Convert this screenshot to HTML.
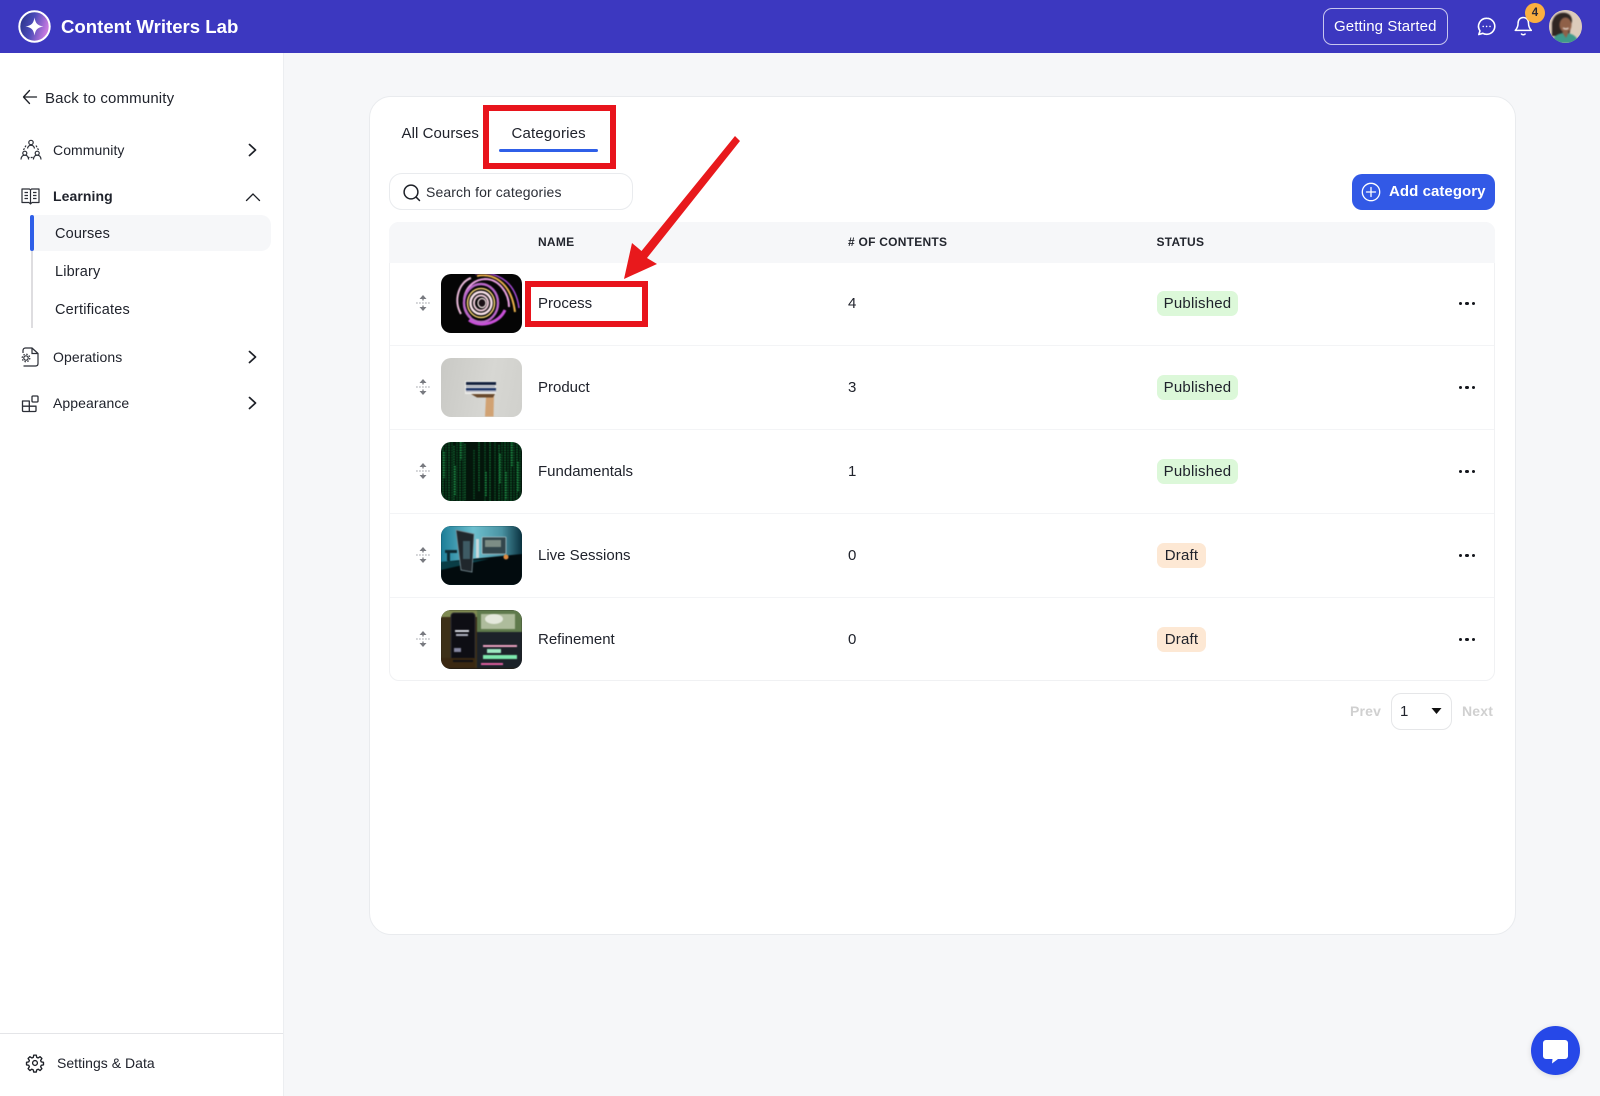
<!DOCTYPE html>
<html><head><meta charset="utf-8"><title>Categories</title>
<style>
*{box-sizing:border-box}
html,body{margin:0;padding:0}
body{width:1600px;height:1095px;position:relative;overflow:hidden;background:#f6f7f9;font-family:"Liberation Sans",sans-serif;color:#20232c}
.a{position:absolute}
.t{position:absolute;white-space:nowrap;line-height:20px;height:20px;font-size:15px;letter-spacing:0}
svg{position:absolute;display:block;overflow:visible}
.thumb{position:absolute;left:441px;width:81px;height:58.5px;border-radius:10px;overflow:hidden}
.thumb svg{left:0;top:0;overflow:hidden}
.line{position:absolute;left:390px;width:1104px;height:1px;background:#f3f4f6}
.badge{position:absolute;left:1157px;height:25px;line-height:25px;border-radius:7px;font-size:15px;letter-spacing:.2px;text-align:center}
.pub{width:81px;background:#dcf8d9}
.dr{width:49px;background:#fde8d4}
.dots{position:absolute;left:1459px;width:16px;height:4px}
.dots i{position:absolute;top:0;width:3.4px;height:3.4px;border-radius:50%;background:#14161c}
.n{position:absolute;left:848px;font-size:15px;line-height:20px}
.h{position:absolute;top:232px;line-height:20px;font-size:12px;font-weight:bold;letter-spacing:.25px;color:#23262e}
</style></head><body>

<!-- top bar -->
<div class="a" style="left:0;top:0;width:1600px;height:52.5px;background:#3c38c0"></div>
<svg style="left:18px;top:10px" width="33" height="33" viewBox="0 0 33 33">
<defs><linearGradient id="lg" x1="0" y1="0" x2="1" y2="0.3"><stop offset="0" stop-color="#24307e"/><stop offset=".5" stop-color="#4a4ab8"/><stop offset="1" stop-color="#c77ae0"/></linearGradient></defs>
<circle cx="16.5" cy="16.5" r="15.2" fill="url(#lg)" stroke="#fff" stroke-width="2"/>
<path d="M16.5 7.5C17.5 13.500 19.500 15.500 25.500 16.500C19.500 17.500 17.500 19.500 16.500 25.500C15.500 19.500 13.500 17.500 7.500 16.500C13.500 15.500 15.500 13.500 16.500 7.500Z" fill="#fff"/>
</svg>
<div class="t" style="left:61px;top:16.500px;color:#fff;font-weight:bold;font-size:18.6px">Content Writers Lab</div>

<div class="a" style="left:1323px;top:8px;width:125px;height:36.5px;border:1px solid #c8c7ee;border-radius:9px"></div>
<div class="t" style="left:1334px;top:16.500px;color:#fff;font-size:15px;letter-spacing:.11px">Getting Started</div>

<svg style="left:1477px;top:17px" width="19" height="19" viewBox="0 0 19 19" fill="none" stroke="#fff" stroke-width="1.6">
<path d="M9.8 1.3a8 8 0 0 1 0 16c-1.5 0-2.8-.3-4-1l-4 1.200 1.200-3.600a8 8 0 0 1 6.800-12.600Z" stroke-linejoin="round"/>
<circle cx="6.200" cy="9.400" r=".8" fill="#fff" stroke="none"/><circle cx="9.600" cy="9.400" r=".8" fill="#fff" stroke="none"/><circle cx="13" cy="9.400" r=".8" fill="#fff" stroke="none"/>
</svg>
<svg style="left:1514px;top:16px" width="19" height="21" viewBox="0 0 19 21" fill="none" stroke="#fff" stroke-width="1.500">
<path d="M9.300 1.500c-3.300 0-5.200 2.600-5.200 5.600 0 4-1.400 5.700-2.800 7.300h16c-1.400-1.600-2.800-3.300-2.800-7.300 0-3-1.900-5.600-5.200-5.600Z" stroke-linejoin="round"/>
<path d="M7.500 18c.8 1 2.700 1 3.600 0" stroke-linecap="round"/>
</svg>
<div class="a" style="left:1525px;top:3px;width:20px;height:20px;border-radius:50%;background:#fbb040;color:#2b2a35;font-size:11.500px;font-weight:bold;line-height:20px;text-align:center">4</div>
<div class="a" style="left:1549px;top:10px;width:33px;height:33px;border-radius:50%;overflow:hidden;background:#d8c6b4">
<svg width="33" height="33" viewBox="0 0 33 33" style="left:0;top:0;filter:blur(.7px);overflow:hidden">
<rect width="33" height="33" fill="#dccbbb"/>
<path d="M3 26V13C5 4 11 2 17 3c4 1 6 4 6 8l-3 15Z" fill="#2f2622"/>
<ellipse cx="16.500" cy="15" rx="6" ry="7.500" fill="#8f6048"/>
<path d="M3 33c1-7 6-10 13-10s12 3 14 10Z" fill="#3f9a8a"/>
<path d="M13 22h7l-3 6Z" fill="#8f6048"/>
<path d="M14 18c2 1.300 4 1.300 5.500 0" stroke="#f3e9e0" stroke-width="1.200" fill="none"/>
</svg></div>

<!-- sidebar -->
<div class="a" style="left:0;top:52.5px;width:283.5px;height:1043px;background:#fff;border-right:1px solid #eceef1"></div>

<svg style="left:22px;top:89px" width="16" height="16" viewBox="0 0 16 16" fill="none" stroke="#1d2027" stroke-width="1.300" stroke-linecap="round" stroke-linejoin="round"><path d="M14.500 8H1.500M7.500 1.500 1.500 8l6 6.500"/></svg>
<div class="t" style="left:45px;top:89px;letter-spacing:.15px">Back to community</div>

<svg style="left:20px;top:139px" width="22" height="22" viewBox="0 0 22 22" fill="none" stroke="#2b2e36" stroke-width="1.200">
<circle cx="11" cy="3.500" r="2.200"/><circle cx="4.800" cy="14.200" r="2"/><circle cx="17.200" cy="14.200" r="2"/>
<path d="M7.500 9.500c.4-2 1.800-3.200 3.500-3.200s3.100 1.200 3.500 3.200M1 20.500c.2-2.800 1.700-4.300 3.800-4.300s3.600 1.500 3.800 4.300M13.400 20.500c.2-2.800 1.700-4.300 3.800-4.300s3.600 1.500 3.800 4.300"/>
<path d="M6 6.500 3.500 11M16 6.500l2.500 4.500M7.500 18.500h7" stroke-dasharray="2 1.200"/>
</svg>
<div class="t" style="left:53px;top:139.500px;font-size:14px;letter-spacing:.08px">Community</div>
<svg style="left:248px;top:143px" width="9" height="14" viewBox="0 0 9 14" fill="none" stroke="#1d2027" stroke-width="1.700" stroke-linecap="round" stroke-linejoin="round"><path d="M1.500 1.500 7.500 7l-6 5.500"/></svg>

<svg style="left:21px;top:187px" width="19" height="19" viewBox="0 0 19 19" fill="none" stroke="#2b2e36" stroke-width="1.200">
<path d="M1 2h7.500l1 1 1-1H18v13.500h-7l-1.500 1.500L8 15.500H1Z" stroke-linejoin="round"/><path d="M9.500 3v14M3.500 5.500h3.500M3.500 8.500h3.500M3.500 11.500h3.500M12 5.500h3.500M12 8.500h3.500M12 11.500h3.500"/>
</svg>
<div class="t" style="left:53px;top:186px;font-size:14px;font-weight:bold;letter-spacing:.08px">Learning</div>
<svg style="left:245px;top:191.500px" width="16" height="10" viewBox="0 0 16 10" fill="none" stroke="#1d2027" stroke-width="1.300" stroke-linecap="round" stroke-linejoin="round"><path d="M1.500 8.500 8 2l6.500 6.500"/></svg>

<div class="a" style="left:31px;top:251px;width:2px;height:77px;background:#dedde0"></div>
<div class="a" style="left:32px;top:215px;width:239px;height:36px;background:#f6f7f9;border-radius:0 10px 10px 0"></div>
<div class="a" style="left:30px;top:215px;width:4px;height:36px;background:#2f5fe8;border-radius:2px"></div>
<div class="t" style="left:55px;top:223.500px;font-size:14.500px;letter-spacing:.15px">Courses</div>
<div class="t" style="left:55px;top:261.500px;font-size:14.500px;letter-spacing:.15px">Library</div>
<div class="t" style="left:55px;top:300px;font-size:14.500px;letter-spacing:.2px">Certificates</div>

<svg style="left:21px;top:347px" width="18" height="20" viewBox="0 0 18 20" fill="none" stroke="#2b2e36" stroke-width="1.200">
<path d="M2 6V3.500C2 2 3 1 4.500 1H11l6 5.500V16.500c0 1.500-1 2.500-2.500 2.500H2.500" stroke-linejoin="round"/><path d="M11 1v5.500h6"/><circle cx="5" cy="11" r="2.200"/><circle cx="5" cy="11" r="3.800" stroke-dasharray="1.500 1.500"/>
</svg>
<div class="t" style="left:53px;top:346.500px;font-size:14px;letter-spacing:.08px">Operations</div>
<svg style="left:248px;top:350px" width="9" height="14" viewBox="0 0 9 14" fill="none" stroke="#1d2027" stroke-width="1.700" stroke-linecap="round" stroke-linejoin="round"><path d="M1.500 1.500 7.500 7l-6 5.500"/></svg>

<svg style="left:21px;top:395px" width="18" height="18" viewBox="0 0 18 18" fill="none" stroke="#2b2e36" stroke-width="1.300">
<path d="M1.500 6h6.800v10.500H2.500a1 1 0 0 1-1-1ZM1.500 11.200h14M8.300 11.200V6.500M15 11.200v4.300a1 1 0 0 1-1 1H8.300" stroke-linejoin="round"/><rect x="11" y="1" width="6" height="6" rx="1"/>
</svg>
<div class="t" style="left:53px;top:393px;font-size:14px;letter-spacing:.08px">Appearance</div>
<svg style="left:248px;top:396px" width="9" height="14" viewBox="0 0 9 14" fill="none" stroke="#1d2027" stroke-width="1.700" stroke-linecap="round" stroke-linejoin="round"><path d="M1.500 1.500 7.500 7l-6 5.500"/></svg>

<div class="a" style="left:0;top:1033px;width:283px;height:1px;background:#e4e5e8"></div>
<svg style="left:26px;top:1054px" width="18" height="18" viewBox="0 0 24 24" fill="none" stroke="#1d2027" stroke-width="1.800" stroke-linejoin="round">
<circle cx="12" cy="12" r="3.200"/>
<path d="M10.300 1.500h3.400l.6 3 1.900.8 2.600-1.700 2.400 2.400-1.700 2.600.8 1.900 3 .6v3.400l-3 .6-.8 1.900 1.700 2.600-2.400 2.400-2.600-1.700-1.900.8-.6 3h-3.400l-.6-3-1.900-.8-2.600 1.700-2.400-2.400 1.700-2.600-.8-1.900-3-.6v-3.400l3-.6.8-1.900-1.700-2.600 2.400-2.400 2.600 1.700 1.900-.8Z"/>
</svg>
<div class="t" style="left:57px;top:1053px;font-size:14px;letter-spacing:.03px">Settings &amp; Data</div>

<!-- main card -->
<div class="a" style="left:369px;top:95.500px;width:1147px;height:839px;background:#fff;border:1px solid #e9ebee;border-radius:22px"></div>

<div class="t" style="left:401.500px;top:123.500px;letter-spacing:.07px">All Courses</div>
<div class="t" style="left:511.500px;top:123.500px;letter-spacing:.18px">Categories</div>
<div class="a" style="left:499px;top:148.500px;width:99px;height:3.500px;border-radius:2px;background:#2f5fe8"></div>
<div class="a" style="left:483px;top:105px;width:133px;height:64px;border:6px solid #e8141c"></div>

<div class="a" style="left:389px;top:173px;width:244px;height:37px;border:1px solid #e9ebee;border-radius:13px"></div>
<svg style="left:403px;top:184px" width="18" height="18" viewBox="0 0 18 18" fill="none" stroke="#1d2027" stroke-width="1.500" stroke-linecap="round"><circle cx="8" cy="8" r="6.900"/><path d="M13.200 13.200 16.500 16.500"/></svg>
<div class="t" style="left:426px;top:182px;font-size:14px;letter-spacing:.12px;color:#2b2e36">Search for categories</div>

<div class="a" style="left:1352px;top:173.500px;width:143px;height:36.500px;background:#3259e6;border-radius:10px"></div>
<svg style="left:1361px;top:182px" width="20" height="20" viewBox="0 0 20 20" fill="none" stroke="#fff" stroke-width="1.300"><circle cx="10" cy="10" r="8.700"/><path d="M10 5.500v9M5.500 10h9" stroke-linecap="round"/></svg>
<div class="t" style="left:1389px;top:181.500px;color:#fff;font-size:15px;font-weight:bold;letter-spacing:.06px">Add category</div>

<!-- table -->
<div class="a" style="left:389px;top:222px;width:1106px;height:459px;border:1px solid #f0f1f3;border-radius:10px"></div>
<div class="a" style="left:389px;top:222px;width:1106px;height:40.500px;background:#f6f7f9;border-radius:10px 10px 0 0"></div>
<div class="h" style="left:538px">NAME</div>
<div class="h" style="left:848px">#&nbsp;OF CONTENTS</div>
<div class="h" style="left:1156.500px">STATUS</div>
<div class="line" style="top:345px"></div>
<div class="line" style="top:429px"></div>
<div class="line" style="top:513px"></div>
<div class="line" style="top:597px"></div>

<!-- drag icons -->
<svg style="left:415px;top:295px" width="16" height="16" viewBox="0 0 16 16" fill="none"><path d="M1 8h14" stroke="#a9abb0" stroke-width="1" stroke-dasharray="1.800 1.200"/><path d="M8 0 4.500 4h7ZM8 16l-3.500-4h7Z" fill="#787a80"/><path d="M8 3v2.500M8 10.500V13" stroke="#787a80" stroke-width="1.300"/></svg>
<svg style="left:415px;top:379px" width="16" height="16" viewBox="0 0 16 16" fill="none"><path d="M1 8h14" stroke="#a9abb0" stroke-width="1" stroke-dasharray="1.800 1.200"/><path d="M8 0 4.500 4h7ZM8 16l-3.500-4h7Z" fill="#787a80"/><path d="M8 3v2.500M8 10.500V13" stroke="#787a80" stroke-width="1.300"/></svg>
<svg style="left:415px;top:463px" width="16" height="16" viewBox="0 0 16 16" fill="none"><path d="M1 8h14" stroke="#a9abb0" stroke-width="1" stroke-dasharray="1.800 1.200"/><path d="M8 0 4.500 4h7ZM8 16l-3.500-4h7Z" fill="#787a80"/><path d="M8 3v2.500M8 10.500V13" stroke="#787a80" stroke-width="1.300"/></svg>
<svg style="left:415px;top:547px" width="16" height="16" viewBox="0 0 16 16" fill="none"><path d="M1 8h14" stroke="#a9abb0" stroke-width="1" stroke-dasharray="1.800 1.200"/><path d="M8 0 4.500 4h7ZM8 16l-3.500-4h7Z" fill="#787a80"/><path d="M8 3v2.500M8 10.500V13" stroke="#787a80" stroke-width="1.300"/></svg>
<svg style="left:415px;top:631px" width="16" height="16" viewBox="0 0 16 16" fill="none"><path d="M1 8h14" stroke="#a9abb0" stroke-width="1" stroke-dasharray="1.800 1.200"/><path d="M8 0 4.500 4h7ZM8 16l-3.500-4h7Z" fill="#787a80"/><path d="M8 3v2.500M8 10.500V13" stroke="#787a80" stroke-width="1.300"/></svg>

<!-- thumbs -->
<div class="thumb" style="top:274.300px;background:#050505"><svg width="81" height="58.500" viewBox="0 0 81 58.500" fill="none" style="filter:blur(.5px)">
<path d="M36 2C50-1 70 6 74 38" stroke="#e9b04b" stroke-width="2"/>
<path d="M34 0C52-3 74 4 78 34" stroke="#a84bd6" stroke-width="1.500"/>
<path d="M30 44C16 30 24 6 44 5c14 0 24 14 24 28" stroke="#e8a0e0" stroke-width="2"/>
<path d="M64 36C58 50 38 54 28 46" stroke="#c850d8" stroke-width="3"/>
<path d="M20 40C12 26 18 8 30 4" stroke="#e8b8d8" stroke-width="2"/>
<ellipse cx="40" cy="29" rx="17" ry="19" stroke="#b866c8" stroke-width="2.500"/>
<ellipse cx="40" cy="29" rx="13.500" ry="14.500" stroke="#f0d070" stroke-width="1.500"/>
<ellipse cx="40" cy="29" rx="10.500" ry="11" stroke="#f8e0e8" stroke-width="2.500"/>
<ellipse cx="40" cy="29" rx="7" ry="7.500" stroke="#eccad8" stroke-width="2"/>
<ellipse cx="41" cy="29" rx="4" ry="4.500" fill="#1a1016" stroke="#f8e8e8" stroke-width="1.200"/>
</svg></div>

<div class="thumb" style="top:358.300px;background:linear-gradient(100deg,#c9c9c5,#d7d7d3 60%,#d0d0cc)"><svg width="81" height="58.500" viewBox="0 0 81 58.500" style="filter:blur(.5px)">
<path d="M30 36c5 0 9 2 15 3l-1 19.500h8.500L53 36Z" fill="#d1a273"/>
<path d="M30 36h24l-2 3.500H36Z" fill="#6a4a2d"/>
<rect x="24" y="23" width="31" height="13" fill="#ecece8"/>
<rect x="25" y="24" width="30" height="3" fill="#15233f"/>
<rect x="25" y="28" width="29" height="1" fill="#8f98a8"/>
<rect x="25" y="30" width="30" height="2.500" fill="#1d3566"/>
<rect x="25" y="33" width="30" height="1" fill="#aab"/>
</svg></div>

<div class="thumb" style="top:442.300px;background:#04150b"><svg width="81" height="58.500" viewBox="0 0 81 58.500" fill="none" style="filter:blur(.45px)" stroke-width="1.300" stroke-dasharray="1.500 1">
<g stroke="#15783a">
<path d="M2 0v59M8 0v59M13 4v55M19 0v59M24 2v56M38 0v50M49 0v59M58 3v56M64 0v59M70 0v59M76 2v57"/></g>
<g stroke="#0e5c2c"><path d="M5 0v59M11 0v59M16 0v59M22 0v59M33 8v50M44 0v59M54 0v59M61 0v59M67 0v59M73 0v59M79 0v59"/></g>
<g stroke="#22a24f"><path d="M3 10v26M14 24v30M20 0v18M45 30v24M59 12v30M65 30v28M71 0v24M77 20v30"/></g>
</svg></div>

<div class="thumb" style="top:526.300px;background:#0b2f3a"><svg width="81" height="58.500" viewBox="0 0 81 58.500" style="filter:blur(.5px)">
<defs><linearGradient id="tg" x1="0" y1="0" x2="1" y2="0"><stop offset="0" stop-color="#1b7c97"/><stop offset=".4" stop-color="#6ec0cf"/><stop offset=".75" stop-color="#4a93a3"/><stop offset="1" stop-color="#0a3240"/></linearGradient></defs>
<rect width="81" height="36" fill="url(#tg)"/>
<path d="M0 36 81 28V59H0Z" fill="#020b0e"/>
<path d="M0 36 48 33 0 44Z" fill="#0a3d46"/>
<path d="M15 4 33 8 31 46 20 44Z" fill="#20272c" stroke="#7a9098" stroke-width=".8"/>
<rect x="22" y="15" width="7" height="18" fill="#3e5b64"/>
<rect x="41" y="11" width="24" height="17" rx="1" fill="#33464c" stroke="#a8c4ca" stroke-width=".8"/>
<rect x="44" y="14" width="16" height="7" fill="#7d8d85"/>
<rect x="35" y="13" width="3" height="19" fill="#cbd8db"/>
<circle cx="65" cy="31" r="2.500" fill="#e08a3f"/>
<path d="M4 24h12v3H9v8H6v-8H4Z" fill="#0e2a33"/>
</svg></div>

<div class="thumb" style="top:610.300px;background:#1b1a16"><svg width="81" height="58.500" viewBox="0 0 81 58.500" style="filter:blur(.6px)">
<rect width="81" height="58.500" fill="#282018"/>
<rect x="0" y="0" width="36" height="58" fill="#3d3018"/>
<rect x="0" y="0" width="36" height="7" fill="#7f8a52"/>
<rect x="36" y="0" width="45" height="22" fill="#5f7a4c"/>
<rect x="40" y="4" width="34" height="15" fill="#aebc9c"/>
<ellipse cx="53" cy="9" rx="9" ry="5" fill="#e4e8dc"/>
<rect x="36" y="22" width="45" height="36" fill="#1c2229"/>
<rect x="42" y="35" width="34" height="2" fill="#eaa0c0"/>
<rect x="46" y="39" width="14" height="4" fill="#9ee8c2"/>
<rect x="42" y="45" width="34" height="4" fill="#7de8ae"/>
<rect x="40" y="53" width="22" height="2" fill="#e060a0"/>
<rect x="10" y="3" width="24" height="48" rx="3" fill="#0e0e14" stroke="#2c2c30"/>
<rect x="14" y="20" width="14" height="2" fill="#d6d8e0"/>
<rect x="15" y="24" width="12" height="2" fill="#b0b2c0"/>
<rect x="13" y="38" width="7" height="4" fill="#8486a0"/>
<rect x="0" y="48" width="34" height="10" fill="#3a2812"/>
<rect x="12" y="50" width="20" height="2" fill="#0e0e14"/>
</svg></div>

<!-- names -->
<div class="t" style="left:538px;top:294px">Process</div>
<div class="t" style="left:538px;top:378px">Product</div>
<div class="t" style="left:538px;top:462px">Fundamentals</div>
<div class="t" style="left:538px;top:546px">Live Sessions</div>
<div class="t" style="left:538px;top:630px">Refinement</div>

<div class="n" style="top:294px">4</div>
<div class="n" style="top:378px">3</div>
<div class="n" style="top:462px">1</div>
<div class="n" style="top:546px">0</div>
<div class="n" style="top:630px">0</div>

<div class="badge pub" style="top:291px">Published</div>
<div class="badge pub" style="top:375px">Published</div>
<div class="badge pub" style="top:459px">Published</div>
<div class="badge dr" style="top:543px">Draft</div>
<div class="badge dr" style="top:627px">Draft</div>

<div class="dots" style="top:302px"><i style="left:0"></i><i style="left:6.300px"></i><i style="left:12.600px"></i></div>
<div class="dots" style="top:386px"><i style="left:0"></i><i style="left:6.300px"></i><i style="left:12.600px"></i></div>
<div class="dots" style="top:470px"><i style="left:0"></i><i style="left:6.300px"></i><i style="left:12.600px"></i></div>
<div class="dots" style="top:553.500px"><i style="left:0"></i><i style="left:6.300px"></i><i style="left:12.600px"></i></div>
<div class="dots" style="top:637.500px"><i style="left:0"></i><i style="left:6.300px"></i><i style="left:12.600px"></i></div>

<!-- pagination -->
<div class="t" style="left:1350px;top:701px;font-size:14px;font-weight:bold;color:#d0d0d0;letter-spacing:.2px">Prev</div>
<div class="a" style="left:1391px;top:693px;width:61px;height:37px;border:1px solid #e5e6e8;border-radius:10px"></div>
<div class="t" style="left:1400px;top:702px;font-size:15px">1</div>
<svg style="left:1431px;top:707.500px" width="11" height="6" viewBox="0 0 11 6"><path d="M.5 0h10L5.500 6Z" fill="#111"/></svg>
<div class="t" style="left:1462px;top:701px;font-size:14px;font-weight:bold;color:#d0d0d0;letter-spacing:.2px">Next</div>

<!-- red annotations -->
<div class="a" style="left:524.500px;top:281px;width:123px;height:46px;border:6px solid #e8141c"></div>
<svg style="left:0;top:0" width="1600" height="1095" viewBox="0 0 1600 1095">
<path d="M735 136 740 141 647 258 657 264 624 279 632 243 641.500 251Z" fill="#e8191c"/>
</svg>

<!-- chat bubble -->
<div class="a" style="left:1531px;top:1026px;width:49px;height:49px;border-radius:50%;background:#2648e8;box-shadow:0 1px 6px rgba(0,0,0,.12)"></div>
<svg style="left:1543px;top:1040px" width="25" height="24" viewBox="0 0 25 24"><path d="M3 0h19a3 3 0 0 1 3 3v13a3 3 0 0 1-3 3H15l-6 4.500.5-4.500H3a3 3 0 0 1-3-3V3a3 3 0 0 1 3-3Z" fill="#fff"/></svg>

</body></html>
